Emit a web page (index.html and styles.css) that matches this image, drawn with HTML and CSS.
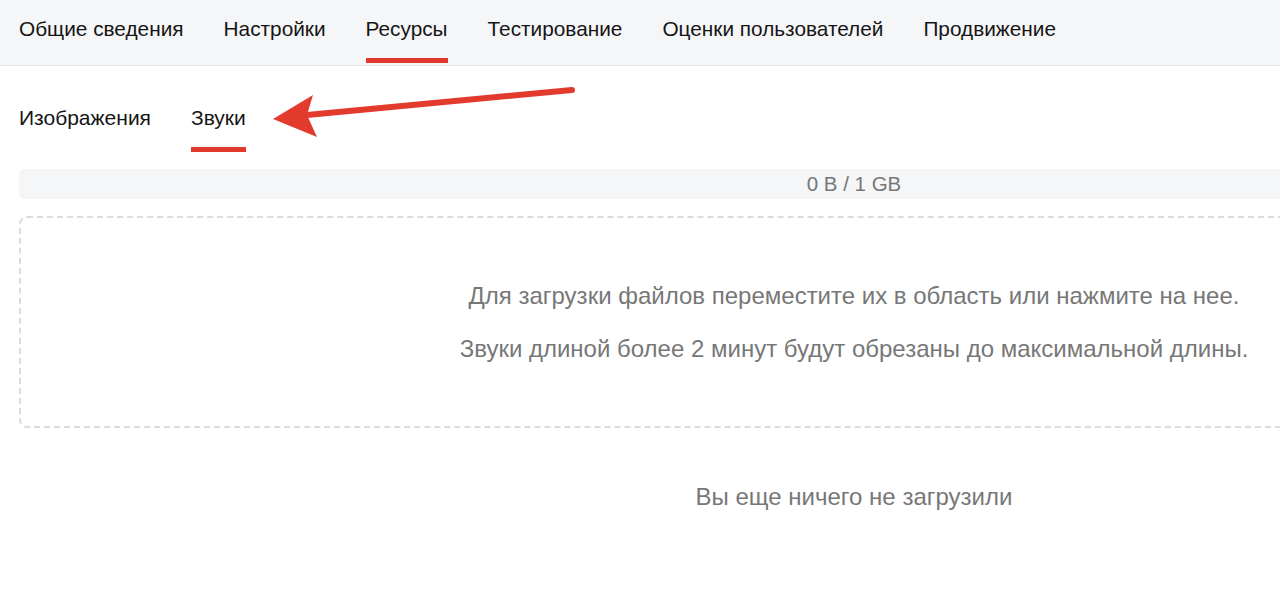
FILE: index.html
```html
<!DOCTYPE html>
<html lang="ru">
<head>
<meta charset="utf-8">
<title>Ресурсы</title>
<link rel="stylesheet" href="styles.css">
</head>
<body>
<div class="page">
  <nav class="topnav">
    <a class="tab">Общие сведения</a>
    <a class="tab">Настройки</a>
    <a class="tab active">Ресурсы</a>
    <a class="tab">Тестирование</a>
    <a class="tab">Оценки пользователей</a>
    <a class="tab">Продвижение</a>
  </nav>
  <main class="content">
    <div class="subtabs">
      <a class="subtab">Изображения</a>
      <a class="subtab active">Звуки</a>
    </div>
    <div class="quota">0 B / 1 GB</div>
    <div class="dropzone">
      <p>Для загрузки файлов переместите их в область или нажмите на нее.</p>
      <p>Звуки длиной более 2 минут будут обрезаны до максимальной длины.</p>
    </div>
    <div class="empty">Вы еще ничего не загрузили</div>
  </main>
  <svg class="arrow" width="320" height="70" viewBox="0 0 320 70">
    <line x1="310" y1="15" x2="45" y2="40" stroke="#e23b2e" stroke-width="6" stroke-linecap="round"/>
    <polygon points="11,44 51,20 45,40 55,62" fill="#e23b2e"/>
  </svg>
</div>
</body>
</html>
```
FILE: styles.css
```css
* { box-sizing: border-box; }
html, body { margin: 0; padding: 0; background: #fff; overflow: hidden; }
body {
  font-family: "Liberation Sans", Arial, sans-serif;
  color: #111;
}
.page { position: relative; width: 1280px; height: 596px; overflow: hidden; }
.topnav {
  display: flex;
  gap: 40px;
  height: 66px;
  padding: 0 19px 2px;
  background: #f5f6f8;
  border-bottom: 1px solid #e3e4e6;
}
.tab {
  display: block;
  font-size: 20.8px;
  line-height: 24px;
  padding-top: 17px;
  height: 63px;
  white-space: nowrap;
  color: #151515;
  border-bottom: 5px solid transparent;
}
.tab.active { border-bottom-color: #df3a2b; }
.content {
  width: 1670px;
  margin-left: 19px;
}
.subtabs {
  display: flex;
  gap: 40px;
  padding-top: 40px;
}
.subtab {
  display: block;
  font-size: 21px;
  line-height: 24px;
  padding-bottom: 17px;
  border-bottom: 5px solid transparent;
  color: #151515;
}
.subtab.active { border-bottom-color: #df3a2b; }
.quota {
  margin-top: 17px;
  height: 30px;
  line-height: 30px;
  background: #f5f6f8;
  border-radius: 5px;
  text-align: center;
  font-size: 20.5px;
  color: #777;
}
.dropzone {
  margin-top: 17px;
  height: 212px;
  border: 2px dashed #dcdcdc;
  border-radius: 8px;
  display: flex;
  flex-direction: column;
  justify-content: center;
  align-items: center;
  gap: 25px;
  font-size: 24px;
  line-height: 28px;
  color: #777;
}
.dropzone p { margin: 0; }
.empty {
  margin-top: 55px;
  text-align: center;
  font-size: 24px;
  line-height: 28px;
  color: #777;
}
.arrow {
  position: absolute;
  left: 262px;
  top: 75px;
}
```
